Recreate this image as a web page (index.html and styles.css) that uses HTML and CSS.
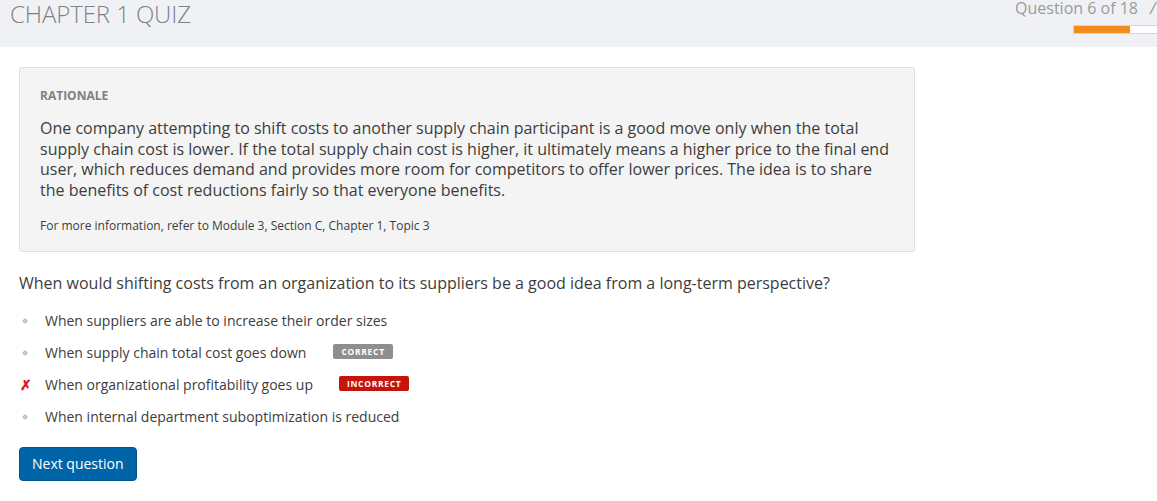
FILE: index.html
```html
<!DOCTYPE html>
<html>
<head>
<meta charset="utf-8">
<link rel="stylesheet" href="styles.css">
</head>
<body>
<header class="topbar">
  <h1 class="title">CHAPTER 1 QUIZ</h1>
  <div class="progress-wrap">
    <div class="qcount">Question 6 of 18<span class="extra">/</span></div>
    <div class="bar"><div class="bar-fill" style="width:67.5%"></div></div>
  </div>
</header>
<main class="content">
  <section class="rationale">
    <div class="r-label">RATIONALE</div>
    <p class="r-text">One company attempting to shift costs to another supply chain participant is a good move only when the total supply chain cost is lower. If the total supply chain cost is higher, it ultimately means a higher price to the final end user, which reduces demand and provides more room for competitors to offer lower prices. The idea is to share the benefits of cost reductions fairly so that everyone benefits.</p>
    <p class="r-more">For more information, refer to Module 3, Section C, Chapter 1, Topic 3</p>
  </section>
  <p class="question">When would shifting costs from an organization to its suppliers be a good idea from a long-term perspective?</p>
  <ul class="options">
    <li class="opt"><span class="mark"><span class="dot"></span></span><span class="opt-text">When suppliers are able to increase their order sizes</span></li>
    <li class="opt"><span class="mark"><span class="dot"></span></span><span class="opt-text">When supply chain total cost goes down</span><span class="badge badge-correct">CORRECT</span></li>
    <li class="opt"><span class="mark x">✗</span><span class="opt-text">When organizational profitability goes up</span><span class="badge badge-incorrect">INCORRECT</span></li>
    <li class="opt"><span class="mark"><span class="dot"></span></span><span class="opt-text">When internal department suboptimization is reduced</span></li>
  </ul>
  <button class="next">Next question</button>
</main>
</body>
</html>
```

FILE: styles.css
```css
* { box-sizing: border-box; }
html, body { margin: 0; padding: 0; background: #fff; overflow: hidden; }
body { font-family: "Open Sans", "Liberation Sans", sans-serif; color: #333; width: 1157px; height: 501px; }

.topbar {
  height: 47px;
  background: #f0f1f5;
  display: flex;
  justify-content: space-between;
  align-items: flex-start;
  padding-left: 10px;
  overflow: hidden;
}
.title {
  margin: 0;
  font-size: 24px;
  font-weight: 300;
  color: #7d8288;
  line-height: 28px;
  letter-spacing: -0.1px;
}
.progress-wrap {
  display: flex;
  flex-direction: column;
  align-items: flex-end;
  width: 160px;
  flex-shrink: 0;
}
.qcount {
  font-size: 16px;
  color: #9a9a9a;
  line-height: 16px;
  white-space: nowrap;
  margin-right: 1px;
}
.qcount .extra { display: inline-block; margin-left: 12px; font-style: italic; width: 6px; }
.bar {
  margin-top: 9px;
  width: 84px;
  height: 9px;
  background: #fff;
  border: 1px solid #d6d6d6;
  border-right: none;
  display: flex;
}
.bar-fill { height: 100%; background: #f28c1e; }

.content { padding: 20px 19px 0 19px; }

.rationale {
  width: 896px;
  background: #f4f4f4;
  border: 1px solid #e0e0e0;
  border-radius: 3px;
  padding: 20px 20px 17px 20px;
}
.r-label {
  font-size: 12px;
  font-weight: 700;
  color: #808080;
  line-height: 16px;
}
.r-text {
  margin: 14px 0 0 0;
  font-size: 16px;
  line-height: 20.7px;
  color: #3d3d3d;
}
.r-more {
  margin: 17px 0 0 0;
  font-size: 12px;
  line-height: 16px;
  color: #3d3d3d;
}

.question {
  margin: 20px 0 0 0;
  font-size: 16px;
  line-height: 22px;
  color: #3d3d3d;
}

.options {
  list-style: none;
  margin: 11px 0 0 0;
  padding: 0;
}
.opt {
  display: flex;
  align-items: center;
  height: 32px;
  font-size: 14px;
  color: #3d3d3d;
}
.mark {
  width: 26px;
  display: flex;
  align-items: center;
  padding-left: 4px;
}
.dot {
  width: 4px;
  height: 4px;
  background: #d2d2d2;
  transform: rotate(45deg);
  border: 1px solid #bcbcbc;
}
.mark.x {
  color: #e8101a;
  font-size: 14px;
  font-weight: 700;
  padding-left: 1px;
}
.badge {
  display: inline-block;
  font-size: 8.5px;
  font-weight: 700;
  color: #fff;
  letter-spacing: 0.7px;
  line-height: 15px;
  padding: 0 8px;
  border-radius: 2px;
  margin-top: -2px;
}
.badge-correct { background: #8e8e8e; margin-left: 27px; }
.badge-incorrect { background: #c4140c; margin-left: 26px; }

.next {
  margin-top: 14px;
  font-family: "Open Sans", "Liberation Sans", sans-serif;
  font-size: 14px;
  color: #fff;
  background: #0064a8;
  border: 1px solid #00538c;
  border-radius: 4px;
  height: 34px;
  padding: 0 12px;
  cursor: pointer;
}
```
